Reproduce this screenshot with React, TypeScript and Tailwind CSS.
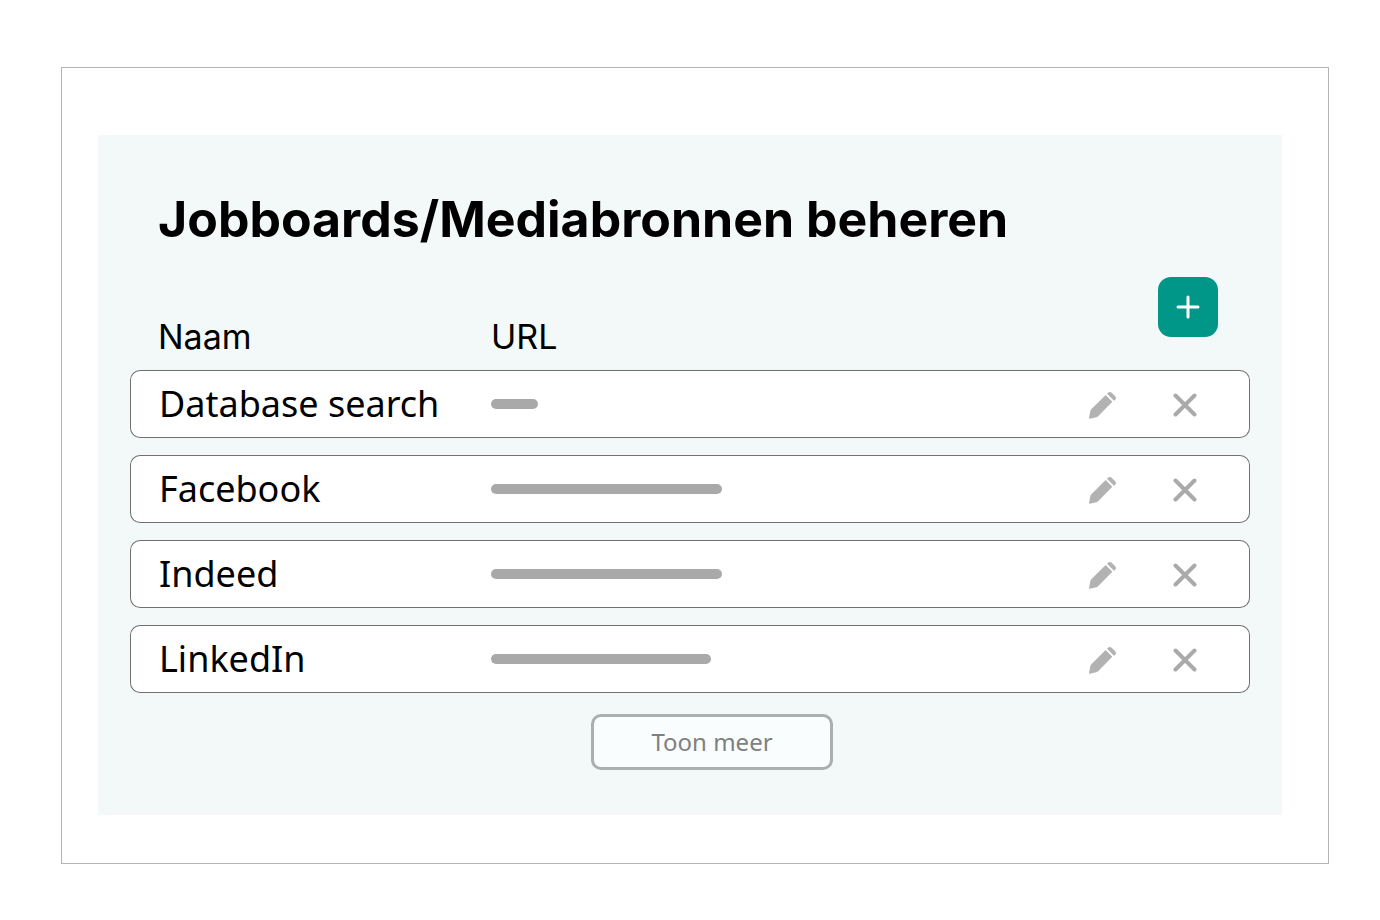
import { useState } from 'react';

type Source = { id: number; name: string; barClass: string };

const initialSources: Source[] = [
  { id: 1, name: 'Database search', barClass: 'w-[47px]' },
  { id: 2, name: 'Facebook', barClass: 'w-[231px]' },
  { id: 3, name: 'Indeed', barClass: 'w-[231px]' },
  { id: 4, name: 'LinkedIn', barClass: 'w-[220px]' },
];

function PencilIcon() {
  return (
    <svg viewBox="0 0 81 81" className="w-[27px] h-[27px]" fill="#b2b2b2" aria-hidden="true">
      <path d="M50 9 L70 29 L28 72 Q26 75 22 76 L2 80 Q0 80 0 78 L4 58 Q4 55 7 52 Z" />
      <path d="M54 5 L57 2 Q62 -2 68 2 L78 12 Q83 18 79 23 L75 26 Z" />
    </svg>
  );
}

function CrossIcon() {
  return (
    <svg viewBox="0 0 24 24" className="w-6 h-6" stroke="#aaaaaa" strokeWidth="4" strokeLinecap="round" aria-hidden="true">
      <path d="M2.5 2.5 L21.5 21.5 M21.5 2.5 L2.5 21.5" />
    </svg>
  );
}

function PlusIcon() {
  return (
    <svg viewBox="0 0 24 24" className="w-6 h-6" stroke="#ffffff" strokeWidth="3" strokeLinecap="round" aria-hidden="true">
      <path d="M12 2 V22 M2 12 H22" />
    </svg>
  );
}

export default function App() {
  const [sources, setSources] = useState(initialSources);

  const removeSource = (id: number) => setSources(sources.filter(s => s.id !== id));

  return (
    <div className="min-h-screen bg-white pt-[67px] pb-14 pl-[61px] pr-[51px] text-black">
      <div className="border border-[#b4b4b4] pt-[67px] pb-12 pl-9 pr-[46px]">
        <main className="bg-[#f3f9f9] px-8 pt-12 pb-[45px]">
          <h1 className="mb-[5px] px-7 text-[50px] leading-[72px] font-bold font-['Inter',sans-serif]">
            Jobboards/Mediabronnen beheren
          </h1>

          <table className="w-full table-fixed border-separate border-spacing-x-0 border-spacing-y-[17px]">
            <thead>
              <tr className="h-[76px] text-left text-[34px] leading-8 font-['Inter',sans-serif]">
                <th scope="col" className="w-[361px] p-0 pl-7 align-bottom font-normal">Naam</th>
                <th scope="col" className="p-0 align-bottom font-normal">URL</th>
                <th scope="col" className="w-[220px] p-0 pr-8 align-top">
                  <button
                    type="button"
                    aria-label="Toevoegen"
                    className="ml-auto flex size-[60px] items-center justify-center rounded-[13px] bg-[#009688]"
                  >
                    <PlusIcon />
                  </button>
                </th>
              </tr>
            </thead>
            <tbody>
              {sources.map(s => (
                <tr key={s.id} className="h-[68px]">
                  <td className="rounded-l-[10px] border-y border-l border-[#707070] bg-white p-0 pl-7 text-[36px] leading-[48px] font-['Noto_Sans',sans-serif]">
                    {s.name}
                  </td>
                  <td className="border-y border-[#707070] bg-white p-0">
                    <div className={`h-[10px] rounded-full bg-[#a9a9a9] ${s.barClass}`} />
                  </td>
                  <td className="rounded-r-[10px] border-y border-r border-[#707070] bg-white p-0 pt-[2px] pr-[52px]">
                    <div className="flex items-center justify-end gap-[57px]">
                      <button type="button" aria-label={`${s.name} bewerken`}>
                        <PencilIcon />
                      </button>
                      <button type="button" aria-label={`${s.name} verwijderen`} onClick={() => removeSource(s.id)}>
                        <CrossIcon />
                      </button>
                    </div>
                  </td>
                </tr>
              ))}
            </tbody>
          </table>

          <div className="flex justify-center pt-1 pl-11">
            <button
              type="button"
              className="h-14 w-[242px] rounded-[10px] border-3 border-[#abafaf] bg-[#f9fdfe] text-[24px] leading-8 text-[#808080] font-['Noto_Sans',sans-serif]"
            >
              Toon meer
            </button>
          </div>
        </main>
      </div>
    </div>
  );
}
